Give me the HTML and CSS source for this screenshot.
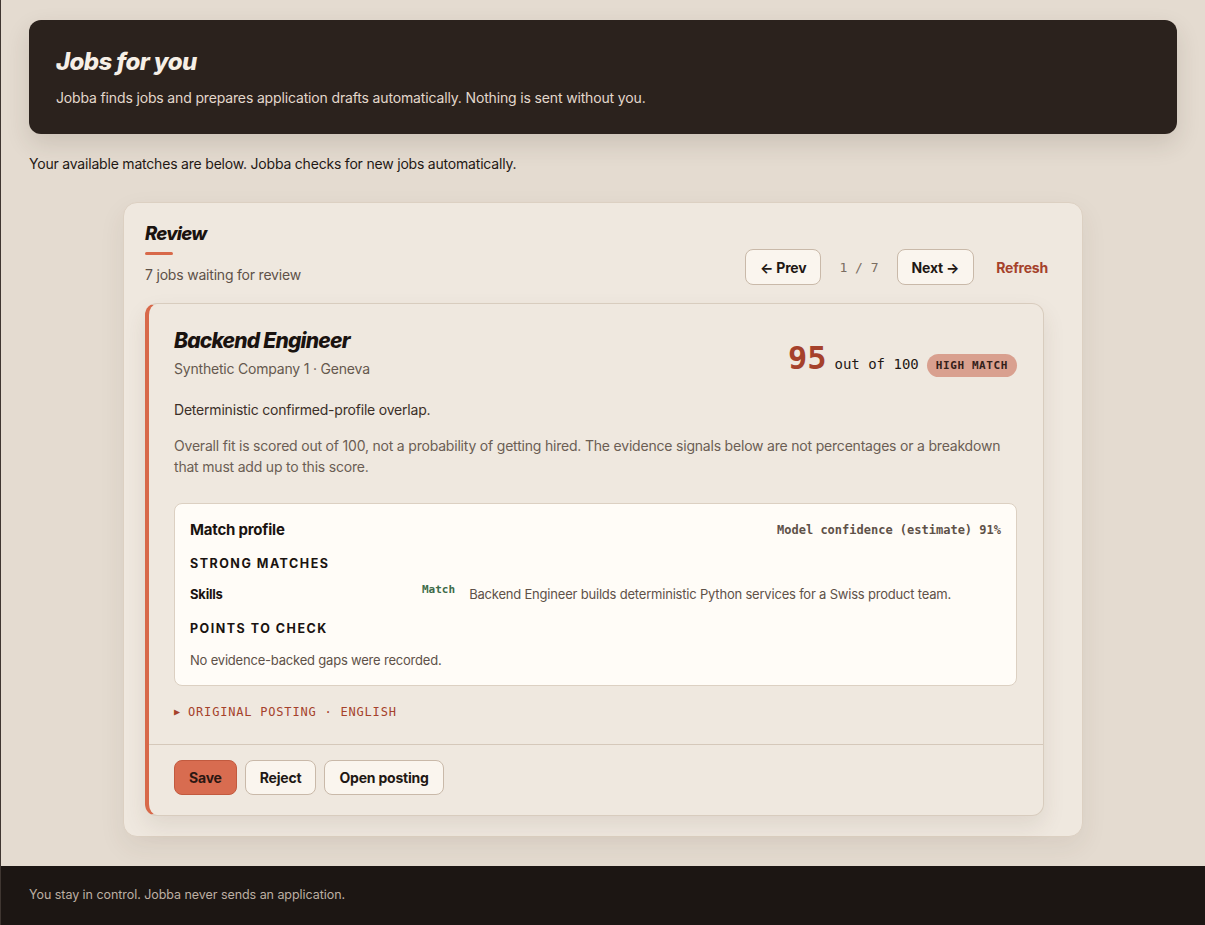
FILE: index.html
```html
<!DOCTYPE html>
<html lang="en">
<head>
<meta charset="utf-8">
<title>Jobs for you</title>
<link rel="stylesheet" href="styles.css">
</head>
<body>
<div class="page">
  <main class="main">
    <header class="hero">
      <h1 class="hero-title">Jobs for you</h1>
      <p class="hero-sub">Jobba finds jobs and prepares application drafts automatically. Nothing is sent without you.</p>
    </header>
    <p class="intro">Your available matches are below. Jobba checks for new jobs automatically.</p>

    <section class="panel">
      <div class="panel-head">
        <div class="panel-titles">
          <h2 class="panel-title">Review</h2>
          <div class="accent-bar"></div>
          <p class="panel-count">7 jobs waiting for review</p>
        </div>
        <div class="pager">
          <button class="btn">← Prev</button>
          <span class="pager-pos">1 / 7</span>
          <button class="btn">Next →</button>
          <button class="link-btn">Refresh</button>
        </div>
      </div>

      <article class="job">
        <div class="job-body">
          <div class="job-head">
            <div>
              <h3 class="job-title">Backend Engineer</h3>
              <p class="job-meta">Synthetic Company 1 · Geneva</p>
            </div>
            <div class="score">
              <span class="score-num">95</span>
              <span class="score-of">out of 100</span>
              <span class="badge">HIGH MATCH</span>
            </div>
          </div>
          <p class="job-reason">Deterministic confirmed-profile overlap.</p>
          <p class="job-note">Overall fit is scored out of 100, not a probability of getting hired. The evidence signals below are not percentages or a breakdown that must add up to this score.</p>

          <div class="profile">
            <div class="profile-head">
              <span class="profile-title">Match profile</span>
              <span class="confidence">Model confidence (estimate) 91%</span>
            </div>
            <h4 class="section-label">STRONG MATCHES</h4>
            <div class="evidence-row">
              <span class="ev-label">Skills</span>
              <span class="ev-tag">Match</span>
              <span class="ev-text">Backend Engineer builds deterministic Python services for a Swiss product team.</span>
            </div>
            <h4 class="section-label section-label-2">POINTS TO CHECK</h4>
            <p class="empty">No evidence-backed gaps were recorded.</p>
          </div>

          <div class="posting"><span class="caret">▶</span> ORIGINAL POSTING · ENGLISH</div>
        </div>
        <div class="job-actions">
          <button class="btn btn-primary">Save</button>
          <button class="btn">Reject</button>
          <button class="btn">Open posting</button>
        </div>
      </article>
    </section>
  </main>
  <footer class="footer">You stay in control. Jobba never sends an application.</footer>
</div>
</body>
</html>
```

FILE: styles.css
```css
* { box-sizing: border-box; }
html, body { margin: 0; padding: 0; }
body {
  background: #e4dbd0;
  font-family: Inter, "Noto Sans", "Liberation Sans", sans-serif;
  color: #1f1814;
  letter-spacing: -0.2px;
}
.page {
  border-left: 1px solid #3f3631;
  min-height: 925px;
  display: flex;
  flex-direction: column;
}
.main {
  padding: 20px 28px 29px 28px;
  flex: 1;
}
.hero {
  background: #2b221d;
  border-radius: 12px;
  padding: 26px 27px 26px;
  box-shadow: 0 10px 24px rgba(60, 40, 25, 0.14);
}
.hero-title {
  margin: 0;
  font-size: 24px;
  line-height: 31px;
  font-weight: 800;
  font-style: italic;
  letter-spacing: -0.6px;
  color: #f6efe6;
}
.hero-sub {
  margin: 11px 0 0;
  font-size: 14px;
  line-height: 20px;
  letter-spacing: -0.15px;
  color: #e3d8cc;
}
.intro {
  margin: 20px 0 28px;
  font-size: 14px;
  line-height: 20px;
  color: #1f1814;
}
.panel {
  max-width: 960px;
  margin: 0 auto;
  background: #efe8df;
  border: 1px solid #dcd0c2;
  border-radius: 14px;
  padding: 18px 20px 20px 21px;
  box-shadow: 0 10px 26px rgba(80, 55, 35, 0.08);
}
.panel-head {
  display: flex;
  justify-content: space-between;
  align-items: flex-end;
}
.panel-title {
  margin: 0;
  font-size: 18.5px;
  line-height: 24px;
  font-weight: 800;
  font-style: italic;
  letter-spacing: -0.8px;
  color: #1a1310;
}
.accent-bar {
  width: 28px;
  height: 3px;
  background: #d8694a;
  border-radius: 2px;
  margin-top: 7px;
}
.panel-count {
  margin: 10px 0 0;
  font-size: 14px;
  line-height: 20px;
  color: #5e5148;
}
.pager {
  display: flex;
  align-items: center;
  gap: 10px;
}
.pager-pos {
  font-family: "DejaVu Sans Mono", "Liberation Mono", monospace;
  font-size: 13px;
  letter-spacing: 0;
  color: #7a6d62;
  padding: 0 8px;
}
.btn {
  font-family: Inter, "Noto Sans", "Liberation Sans", sans-serif;
  font-size: 14px;
  font-weight: 700;
  letter-spacing: -0.2px;
  color: #1f1814;
  background: #faf5ee;
  border: 1px solid #c9b9a9;
  border-radius: 8px;
  height: 36px;
  padding: 0 14px;
  cursor: pointer;
}
.link-btn {
  font-family: Inter, "Noto Sans", "Liberation Sans", sans-serif;
  font-size: 14px;
  font-weight: 700;
  letter-spacing: -0.2px;
  color: #a5412b;
  background: transparent;
  border: none;
  padding: 0 14px 0 12px;
  height: 36px;
  cursor: pointer;
}
.job {
  max-width: 899px;
  margin-top: 18px;
  background: #efe8df;
  border: 1px solid #d8ccbe;
  border-left: 4px solid #d8694a;
  border-radius: 12px;
  box-shadow: 0 10px 22px rgba(80, 55, 35, 0.1);
}
.job-body {
  padding: 24px 26px 24px 25px;
}
.job-head {
  display: flex;
  justify-content: space-between;
  align-items: flex-end;
}
.job-title {
  margin: 0;
  font-size: 21px;
  line-height: 26px;
  font-weight: 800;
  font-style: italic;
  letter-spacing: -0.8px;
  color: #1a1310;
}
.job-meta {
  margin: 5px 0 0;
  font-size: 14px;
  line-height: 20px;
  color: #65584e;
}
.score {
  display: flex;
  align-items: baseline;
  gap: 8px;
  margin-bottom: 2px;
  letter-spacing: 0;
}
.score-num {
  font-family: "DejaVu Sans Mono", "Liberation Mono", monospace;
  font-size: 32px;
  line-height: 1;
  font-weight: 700;
  color: #a5412b;
}
.score-of {
  font-family: "DejaVu Sans Mono", "Liberation Mono", monospace;
  font-size: 14px;
  color: #1f1814;
}
.badge {
  font-family: "DejaVu Sans Mono", "Liberation Mono", monospace;
  font-size: 11px;
  font-weight: 700;
  letter-spacing: 0.6px;
  color: #34201a;
  background: #d9a08f;
  border-radius: 12px;
  padding: 5px 9px 5px 9px;
  line-height: 13px;
}
.job-reason {
  margin: 20px 0 0;
  font-size: 14px;
  line-height: 21px;
  color: #3b2f28;
}
.job-note {
  margin: 15px 0 0;
  font-size: 14px;
  line-height: 21px;
  color: #6b5e54;
}
.profile {
  margin-top: 26px;
  background: #fffcf7;
  border: 1px solid #dcd0c2;
  border-radius: 8px;
  padding: 16px 15px 15px;
}
.profile-head {
  display: flex;
  justify-content: space-between;
  align-items: center;
}
.profile-title {
  font-size: 15px;
  line-height: 20px;
  font-weight: 700;
  color: #1a1310;
}
.confidence {
  font-family: "DejaVu Sans Mono", "Liberation Mono", monospace;
  font-size: 12px;
  font-weight: 700;
  letter-spacing: 0;
  color: #5e5148;
}
.section-label {
  margin: 16px 0 0;
  font-size: 12.5px;
  line-height: 16px;
  font-weight: 700;
  letter-spacing: 1.5px;
  color: #1a1310;
}
.section-label-2 { margin-top: 17px; }
.evidence-row {
  display: grid;
  grid-template-columns: 218px auto 1fr;
  column-gap: 14px;
  align-items: start;
  margin-top: 12px;
}
.ev-label {
  font-size: 13px;
  line-height: 20px;
  font-weight: 700;
  color: #1a1310;
}
.ev-tag {
  font-family: "DejaVu Sans Mono", "Liberation Mono", monospace;
  font-size: 11px;
  line-height: 12px;
  font-weight: 700;
  letter-spacing: 0;
  color: #3d6b49;
}
.ev-text {
  font-size: 13px;
  line-height: 20px;
  color: #5e5148;
}
.empty {
  margin: 13px 0 0;
  font-size: 13px;
  line-height: 20px;
  color: #5e5148;
}
.posting {
  margin-top: 18px;
  font-family: "DejaVu Sans Mono", "Liberation Mono", monospace;
  font-size: 12px;
  line-height: 16px;
  letter-spacing: 0.8px;
  color: #a5412b;
}
.caret {
  font-size: 10px;
  letter-spacing: 0;
  vertical-align: 1px;
}
.job-actions {
  border-top: 1px solid #d5c8ba;
  padding: 15px 25px 20px;
  display: flex;
  gap: 8px;
}
.job-actions .btn { height: 35px; }
.btn-primary {
  background: #d86c50;
  border-color: #c25a3f;
  color: #2a1712;
}
.footer {
  background: #1c1613;
  color: #bcafa2;
  font-size: 12.5px;
  line-height: 18px;
  letter-spacing: -0.05px;
  padding: 20px 28px 21px;
}
```
